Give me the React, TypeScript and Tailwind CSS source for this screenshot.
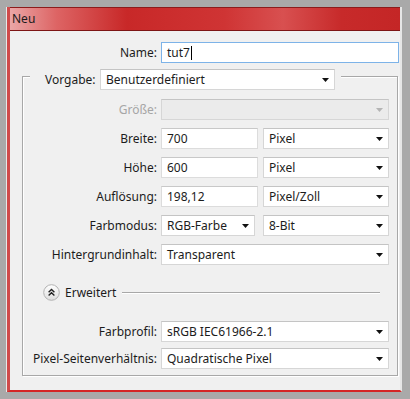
import React from 'react';

function Arrow({ disabled }: { disabled?: boolean }) {
  return (
    <svg width="7" height="4" viewBox="0 0 7 4" className="shrink-0">
      <path d="M0 0 H7 L3.5 4 Z" fill={disabled ? '#b4b4b4' : '#111'} />
    </svg>
  );
}

function Select({ value, w, disabled }: { value?: string; w: string; disabled?: boolean }) {
  return (
    <div
      className={`${w} h-[21px] flex items-center justify-between pl-[5px] pr-[5px] border border-[#d6d6d6] border-t-[#c4c4c4] ${
        disabled ? 'bg-[#ebebeb]' : 'bg-white'
      }`}
    >
      <span className="leading-[16px] whitespace-nowrap">{value}</span>
      <Arrow disabled={disabled} />
    </div>
  );
}

function TextBox({ value, w }: { value: string; w: string }) {
  return (
    <div className={`${w} h-[21px] flex items-center pl-[5px] bg-white border border-[#dcdcdc] border-t-[#c8c8c8] leading-[16px]`}>
      {value}
    </div>
  );
}

function Row({ label, children, disabled }: { label: string; children: React.ReactNode; disabled?: boolean }) {
  return (
    <div className="flex items-center h-[21px]">
      <span className={`w-[138px] shrink-0 text-right pr-[4px] leading-[16px] ${disabled ? 'text-[#a6a6a6]' : ''}`}>{label}</span>
      {children}
    </div>
  );
}

export default function App() {
  return (
    <div className="w-[410px] h-[399px] bg-[#a9a9a9] pt-[7px] pl-[7px] overflow-hidden font-['Noto_Sans',sans-serif] text-[12px] text-[#1c1c1c] leading-[16px]">
      <div className="w-[395px] h-[385px] flex flex-col border-l-[3px] border-l-[#cf4b4b] border-b-[2px] border-b-[#d42626] border-r-[2px] border-r-[#e6e6e6] shadow-[-1px_0_0_#e8e8e8]">
        {/* Title bar */}
        <div className="h-[24px] flex items-center pl-[2px] border-t border-t-[#8c1c1c] border-b border-b-[#7d1515] bg-[linear-gradient(90deg,#eaa6a6_0%,#dd6464_12%,#c82828_30%,#cf3434_55%,#d85050_70%,#c72a2a_85%,#c42626_100%)]">
          <span className="text-[12px] text-[#1a1a1a]">Neu</span>
        </div>

        {/* Content */}
        <div className="flex-1 bg-[#f0f0f0] flex flex-col">
          <div className="flex items-center mt-[11px]">
            <span className="w-[147px] text-right">Name:</span>
            <div className="ml-[4px] w-[238px] h-[21px] flex items-center pl-[5px] bg-white border border-[#7db3e8]">
              tut7
              <span className="w-px h-[14px] bg-black ml-[1px]" />
            </div>
          </div>

          {/* Group box */}
          <div className="ml-[12px] mt-[13px] w-[376px] h-[300px] border border-[#a8a8a8] shadow-[inset_1px_1px_0_#fff,1px_1px_0_#fff] flex flex-col">
            <div className="-mt-[8px] ml-[7px] pl-[15px] pr-[6px] w-fit bg-[#f0f0f0] flex items-center">
              <span className="w-[50px] text-right">Vorgabe:</span>
              <div className="ml-[5px]">
                <Select value="Benutzerdefiniert" w="w-[235px]" />
              </div>
            </div>

            <div className="mt-[9px] flex flex-col gap-[8px]">
              <Row label="Größe:" disabled>
                <Select w="w-[228px]" disabled />
              </Row>
              <Row label="Breite:">
                <TextBox value="700" w="w-[97px]" />
                <div className="ml-[5px]">
                  <Select value="Pixel" w="w-[126px]" />
                </div>
              </Row>
              <Row label="Höhe:">
                <TextBox value="600" w="w-[97px]" />
                <div className="ml-[5px]">
                  <Select value="Pixel" w="w-[126px]" />
                </div>
              </Row>
              <Row label="Auflösung:">
                <TextBox value="198,12" w="w-[97px]" />
                <div className="ml-[5px]">
                  <Select value="Pixel/Zoll" w="w-[126px]" />
                </div>
              </Row>
              <Row label="Farbmodus:">
                <Select value="RGB-Farbe" w="w-[94px]" />
                <div className="ml-[8px]">
                  <Select value="8-Bit" w="w-[126px]" />
                </div>
              </Row>
              <Row label="Hintergrundinhalt:">
                <Select value="Transparent" w="w-[228px]" />
              </Row>
            </div>

            {/* Erweitert */}
            <div className="mt-[19px] ml-[20px] mr-[17px] h-[17px] flex items-center">
              <svg width="17" height="17" viewBox="0 0 17 17" className="shrink-0">
                <defs>
                  <linearGradient id="eg" x1="0" y1="0" x2="0" y2="1">
                    <stop offset="0" stopColor="#ffffff" />
                    <stop offset="1" stopColor="#dedede" />
                  </linearGradient>
                </defs>
                <circle cx="8.5" cy="8.5" r="7.8" fill="url(#eg)" stroke="#b2b2b2" strokeWidth="1" />
                <path d="M5.6 8.2 L8.5 5.5 L11.4 8.2 M5.6 11.4 L8.5 8.7 L11.4 11.4" fill="none" stroke="#222" strokeWidth="1.4" />
              </svg>
              <span className="ml-[5px]">Erweitert</span>
              <div className="ml-[6px] flex-1 h-[2px] border-t border-t-[#a8a8a8] border-b border-b-white" />
            </div>

            <div className="mt-[20px] flex flex-col gap-[6px]">
              <Row label="Farbprofil:">
                <Select value="sRGB IEC61966-2.1" w="w-[228px]" />
              </Row>
              <Row label="Pixel-Seitenverhältnis:">
                <Select value="Quadratische Pixel" w="w-[228px]" />
              </Row>
            </div>
          </div>
        </div>
      </div>
    </div>
  );
}
